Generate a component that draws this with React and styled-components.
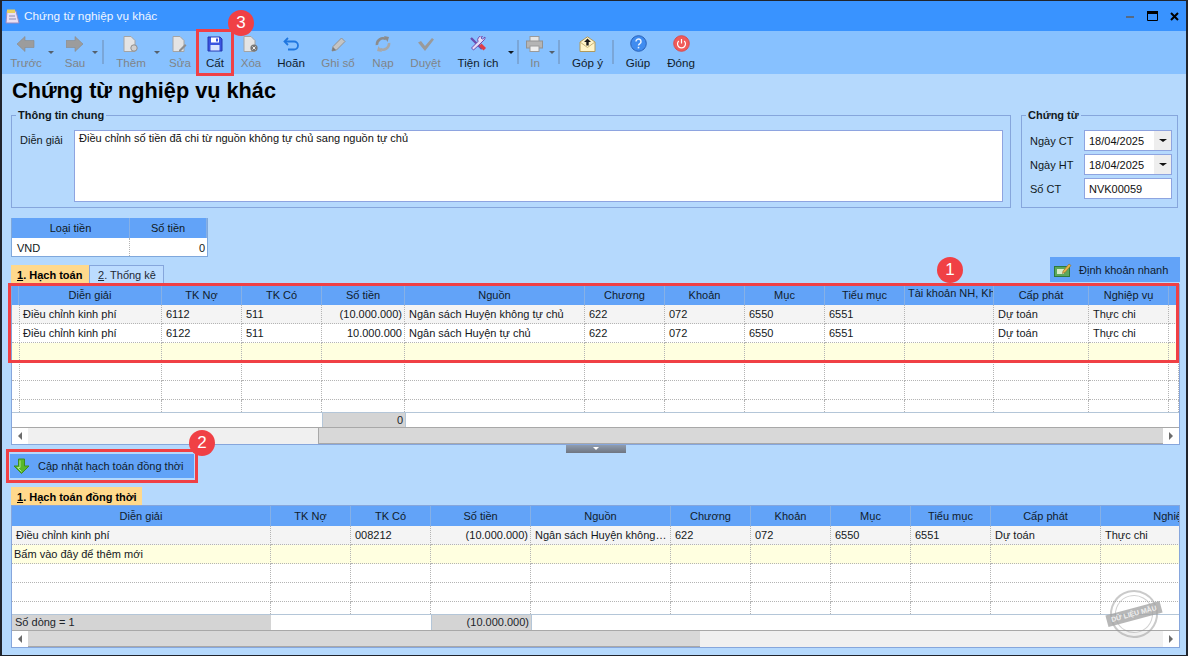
import React from 'react';
import styled, { createGlobalStyle } from 'styled-components';

const GlobalStyle = createGlobalStyle`
  html, body {
    margin: 0;
    padding: 0;
    background: #b5d9fd;
  }
  * {
    box-sizing: border-box;
  }
`;

const Window = styled.div`
  position: relative;
  width: 1188px;
  height: 656px;
  overflow: hidden;
  display: flex;
  flex-direction: column;
  background: #b5d9fd;
  border: solid #20242c;
  border-width: 1px 2px;
  font-family: "Liberation Sans", Arial, sans-serif;
  font-size: 11px;
  color: #101820;
`;

const TitleBar = styled.div`
  height: 30px;
  flex: none;
  display: flex;
  align-items: center;
  background: #3993ff;
  padding: 0 2px 0 2px;
  color: #eef5ff;
  font-size: 11.8px;
`;

const TitleText = styled.span`
  margin-left: 2px;
  flex: 1;
`;

const WinButton = styled.button`
  width: 20px;
  height: 16px;
  margin-left: ${(p) => p.$gap || 0}px;
  padding: 0;
  border: 0;
  background: none;
  display: flex;
  align-items: center;
  justify-content: center;
`;

const Toolbar = styled.div`
  height: 43px;
  flex: none;
  display: flex;
  background: #87c1ff;
  padding-left: 2px;
  font-size: 11.6px;
`;

const ToolButton = styled.div`
  width: ${(p) => p.$w}px;
  flex: none;
  display: flex;
  flex-direction: column;
  align-items: center;
  padding-top: 4px;
  color: ${(p) => (p.$disabled ? '#808488' : '#101c2c')};
  white-space: nowrap;
`;

const ToolIcon = styled.div`
  height: 17px;
  display: flex;
  align-items: center;
  justify-content: center;
`;

const ToolLabel = styled.span`
  margin-top: 4px;
  line-height: 14px;
`;

const DropBox = styled.div`
  width: ${(p) => p.$w}px;
  flex: none;
  padding-top: 20px;
`;

const Tri = styled.div`
  width: 0;
  height: 0;
  border-left: ${(p) => p.$size || 3}px solid transparent;
  border-right: ${(p) => p.$size || 3}px solid transparent;
  border-top: ${(p) => (p.$size ? p.$size - 0.5 : 3)}px solid ${(p) => p.$color || '#55606c'};
`;

const Sep = styled.div`
  width: 2px;
  height: 24px;
  flex: none;
  margin: 9px ${(p) => p.$right || 0}px 0 0;
  background: #7aa6d8;
`;

const Body = styled.div`
  flex: 1;
  display: flex;
  flex-direction: column;
  padding: 0 6px 0 9px;
`;

const PageTitle = styled.h1`
  margin: 4px 0 0 1px;
  font-size: 21.7px;
  line-height: 26px;
  font-weight: bold;
  color: #000;
`;

const TopRow = styled.div`
  display: flex;
  gap: 10px;
  margin: 4px 2px 0 0;
  height: 100px;
`;

const Group = styled.fieldset`
  margin: 0;
  padding: 8px 7px 0 8px;
  border: 1px solid #86a6dc;
  min-width: 0;
  flex: ${(p) => (p.$w ? `0 0 ${p.$w}px` : 1)};
  display: flex;
`;

const Legend = styled.legend`
  margin-left: -4px;
  padding: 0 2px;
  font-weight: bold;
  line-height: 14px;
`;

const MemoLabel = styled.label`
  width: 54px;
  flex: none;
  padding-top: 4px;
`;

const Memo = styled.textarea`
  flex: 1;
  height: 72px;
  resize: none;
  padding: 1px 4px;
  border: 1px solid #8ea4e0;
  border-radius: 0;
  background: #fff;
  font: inherit;
  color: #101010;
  outline: none;
`;

const FieldList = styled.div`
  display: flex;
  flex-direction: column;
  gap: 3px;
  width: 100%;
`;

const Field = styled.div`
  display: flex;
  align-items: center;
  height: 21px;
`;

const FieldLabel = styled.span`
  width: 54px;
  flex: none;
`;

const FieldBox = styled.div`
  width: 88px;
  height: 21px;
  flex: none;
  display: flex;
  align-items: center;
  justify-content: space-between;
  border: 1px solid #8ea4e0;
  background: #fff;
  padding-left: 4px;
  color: #101010;
`;

const FieldDrop = styled.div`
  width: 17px;
  height: 100%;
  display: flex;
  align-items: center;
  justify-content: center;
  background: #eeeeee;
`;

const MoneyTable = styled.div`
  width: 197px;
  margin-top: 10px;
  display: grid;
  grid-template-columns: 118px 77px;
  grid-template-rows: 20px 18px;
  border: solid #7fa8dc;
  border-width: 0 1px 1px;
`;

const MoneyHead = styled.div`
  display: flex;
  align-items: center;
  justify-content: center;
  background: #62a3f8;
  border-right: 1px solid #86b0e6;
`;

const MoneyCell = styled.div`
  display: flex;
  align-items: center;
  justify-content: ${(p) => (p.$right ? 'flex-end' : 'flex-start')};
  padding: 1px 2px 0 5px;
  background: #fff;
  border-right: ${(p) => (p.$right ? 'none' : '1px dotted #b4b4b4')};
`;

const TabRow = styled.div`
  height: 27px;
  display: flex;
  justify-content: space-between;
`;

const Tabs = styled.div`
  display: flex;
  align-self: flex-end;
`;

const Tab = styled.div`
  height: ${(p) => p.$h || 19}px;
  padding: 0 2px 0 ${(p) => (p.$active ? 5 : 8)}px;
  width: ${(p) => p.$w}px;
  display: flex;
  align-items: center;
  white-space: pre;
  font-weight: ${(p) => (p.$active ? 'bold' : 'normal')};
  background: ${(p) => (p.$active ? '#ffd98c' : '#bcdcff')};
  border: 1px solid ${(p) => (p.$active ? '#ffd98c' : '#86a6dc')};
  border-bottom: 0;
  color: ${(p) => (p.$active ? '#000' : '#1c2834')};

  u {
    text-decoration: underline;
  }
`;

const ActionButton = styled.button`
  width: ${(p) => p.$w}px;
  height: ${(p) => p.$h}px;
  flex: none;
  margin-left: ${(p) => p.$ml || 0}px;
  padding: 0 0 0 ${(p) => p.$pl}px;
  display: flex;
  align-items: center;
  gap: ${(p) => p.$gap}px;
  border: 0;
  background: #62a3f8;
  font: inherit;
  color: #101c2c;
  white-space: nowrap;
`;

const GridBox = styled.div`
  flex: none;
  border: 1px solid #86a6dc;
  background: #fff;
  overflow: hidden;
`;

const Row = styled.div`
  display: grid;
  grid-template-columns: ${(p) => p.$cols};
  height: ${(p) => p.$h}px;
  background: ${(p) => p.$bg || '#fff'};
`;

const HeadCell = styled.div`
  display: flex;
  align-items: ${(p) => (p.$top ? 'flex-start' : 'center')};
  justify-content: ${(p) => (p.$top ? 'flex-start' : 'center')};
  padding: ${(p) => (p.$top ? '2px 0 0 3px' : '0')};
  overflow: hidden;
  white-space: nowrap;
  background: #62a3f8;
  border-right: 1px solid #86b0e6;
  color: #101c2c;
`;

const Cell = styled.div`
  padding: 0 ${(p) => (p.$right ? 2 : 3)}px 0 ${(p) => p.$pl ?? 4}px;
  line-height: 18px;
  text-align: ${(p) => (p.$right ? 'right' : 'left')};
  overflow: hidden;
  white-space: nowrap;
  text-overflow: ellipsis;
  border-right: 1px dotted #b4b4b4;
  border-bottom: ${(p) => (p.$open ? 'none' : '1px dotted #b4b4b4')};
  color: #14181c;
`;

const SumRow = styled.div`
  display: flex;
  height: ${(p) => p.$h}px;
  border-top: 1px solid #b4c6d8;
  background: #fff;
`;

const SumCell = styled.div`
  width: ${(p) => (p.$w ? `${p.$w}px` : 'auto')};
  flex: ${(p) => (p.$w ? 'none' : 1)};
  padding: 0 2px 0 3px;
  line-height: 15px;
  text-align: ${(p) => (p.$right ? 'right' : 'left')};
  background: ${(p) => (p.$gray ? '#d4d4d4' : '#fff')};
  border-left: ${(p) => (p.$line ? '1px solid #b4c6d8' : 'none')};
  color: #20242a;
`;

const ScrollBar = styled.div`
  height: 17px;
  display: flex;
  background: #f0f0f0;
  border-top: 1px solid #a8a8a8;
`;

const ScrollBtn = styled.div`
  width: 16px;
  flex: none;
  display: flex;
  align-items: center;
  justify-content: center;
  background: #fff;
`;

const ScrollTrack = styled.div`
  flex: 1;
  padding-left: ${(p) => p.$left}px;
  display: flex;
`;

const Thumb = styled.div`
  width: ${(p) => p.$w}px;
  height: 100%;
  background: #d8d8d8;
  border: solid #a8a8a8;
  border-width: 0 0 1px ${(p) => (p.$flat ? 0 : 1)}px;
`;

const Arrow = styled.div`
  width: 0;
  height: 0;
  border-top: 4px solid transparent;
  border-bottom: 4px solid transparent;
  ${(p) => (p.$dir === 'left' ? 'border-right: 4px solid #6c6c6c;' : 'border-left: 4px solid #6c6c6c;')}
`;

const SplitRow = styled.div`
  height: 9px;
  flex: none;
  display: flex;
  justify-content: center;
  padding-left: 1px;
`;

const SplitHandle = styled.div`
  width: 60px;
  height: 8px;
  display: flex;
  justify-content: center;
  padding-top: 2px;
  background: linear-gradient(#8f9db0, #6f7580);
`;

const SubTabs = styled.div`
  display: flex;
  margin-top: 9px;
`;

const RedFrame = styled.div`
  position: absolute;
  left: ${(p) => p.$x}px;
  top: ${(p) => p.$y}px;
  width: ${(p) => p.$w}px;
  height: ${(p) => p.$h}px;
  border: 3px solid #f04045;
  pointer-events: none;
`;

const Badge = styled.div`
  position: absolute;
  left: ${(p) => p.$x - 13}px;
  top: ${(p) => p.$y - 13}px;
  width: 26px;
  height: 26px;
  border-radius: 50%;
  display: flex;
  align-items: center;
  justify-content: center;
  background: #f04045;
  color: #fff;
  font-size: 17px;
`;

const Stamp = styled.div`
  position: absolute;
  left: 1108px;
  top: 589px;
  width: 48px;
  height: 48px;
  border-radius: 50%;
  border: 2px solid rgba(150, 150, 150, 0.5);
  display: flex;
  align-items: center;
  justify-content: center;
  transform: rotate(-15deg);
  pointer-events: none;

  &::before {
    content: '';
    position: absolute;
    inset: 3px;
    border-radius: 50%;
    border: 1px solid rgba(150, 150, 150, 0.45);
  }
`;

const StampBand = styled.div`
  position: relative;
  flex: none;
  width: 56px;
  height: 12px;
  line-height: 12px;
  text-align: center;
  background: rgba(165, 165, 165, 0.8);
  color: #eee;
  font-size: 7px;
  font-weight: bold;
  white-space: nowrap;
`;

const Svg = ({ w = 18, h = 16, children }) => (
  <svg width={w} height={h} viewBox={`0 0 ${w} ${h}`} style={{ display: 'block' }}>
    {children}
  </svg>
);

const BackIcon = () => (
  <Svg>
    <path d="M0 8 8 .5v4h9v7H8v4z" fill="#9c9c9c" stroke="#8a8a8a" strokeWidth=".6" />
  </Svg>
);

const ForwardIcon = () => (
  <Svg>
    <path d="M17 8 9 .5v4H0v7h9v4z" fill="#9c9c9c" stroke="#8a8a8a" strokeWidth=".6" />
  </Svg>
);

const Page = () => <path d="M2 .5h7l4 4v11H2z" fill="#e4e4e4" stroke="#a4a4a4" />;

const NewIcon = () => (
  <Svg>
    <Page />
    <circle cx="12" cy="12" r="3.2" fill="#cfcfcf" stroke="#8e8e8e" />
  </Svg>
);

const EditIcon = () => (
  <Svg>
    <Page />
    <path d="M8 14 14 8l1.5 1.5-6 6H8z" fill="#8e8e8e" />
  </Svg>
);

const SaveIcon = () => (
  <Svg w={16}>
    <path d="M1 1h12l2 2v12H1z" fill="#3a55e0" stroke="#2438b0" />
    <rect x="4" y="1.5" width="8" height="5" fill="#fff" />
    <rect x="9" y="2.5" width="2" height="3" fill="#3a55e0" />
    <rect x="3.5" y="9" width="9" height="5.5" fill="#d8e4ff" />
  </Svg>
);

const DeleteIcon = () => (
  <Svg>
    <Page />
    <circle cx="12" cy="12" r="3.6" fill="#777" />
    <path d="m10.5 10.5 3 3m0-3-3 3" stroke="#eee" />
  </Svg>
);

const UndoIcon = () => (
  <Svg w={17}>
    <path d="M5 2 1.5 5.5 5 9" fill="none" stroke="#1f77e0" strokeWidth="1.8" />
    <path d="M2 5.5h9a3.8 3.8 0 0 1 0 8H5" fill="none" stroke="#1f77e0" strokeWidth="1.8" />
  </Svg>
);

const PencilIcon = () => (
  <Svg w={17}>
    <path d="M2 15 3 10.500 11.500 2 15 5.500 6.500 14z" fill="#c4c4c4" stroke="#929292" />
    <path d="M2 15 3 11l3 3z" fill="#7c7c7c" />
  </Svg>
);

const ReloadIcon = () => (
  <Svg>
    <path d="M3 9A6 6 0 0 1 12 3.200" fill="none" stroke="#8c8c8c" strokeWidth="2.600" />
    <path d="m10 0 5 1-1.500 5z" fill="#8c8c8c" />
    <path d="M15 7a6 6 0 0 1-9 5.800" fill="none" stroke="#a8a8a8" strokeWidth="2.600" />
    <path d="m8 16-5-1 1.500-5z" fill="#a8a8a8" />
  </Svg>
);

const CheckIcon = () => (
  <Svg>
    <path d="M1 6.500 4 5l4 5 7-8 2 1.500L8 15z" fill="#9a9a9a" />
  </Svg>
);

const ToolsIcon = () => (
  <Svg>
    <path d="M2 2 5 5M5 5l8 8" stroke="#6a4cb0" strokeWidth="2.400" fill="none" />
    <path d="M11 8 15 4a3.500 3.500 0 0 0 1-3l-2.500 2L12 2l1.500-2A4 4 0 0 0 9 5.500L2.500 12l2 2z" fill="#e6dcf6" stroke="#6a4cb0" />
    <path d="m10 10 2.500-2.500L17 12l-2.500 2.500z" fill="#e03c46" />
  </Svg>
);

const PrintIcon = () => (
  <Svg>
    <rect x="4" y=".5" width="9" height="5" fill="#e6e6e6" stroke="#9a9a9a" />
    <rect x=".5" y="5" width="16" height="7" fill="#b4b4b4" stroke="#929292" />
    <rect x="4" y="10" width="9" height="5.500" fill="#eee" stroke="#9a9a9a" />
  </Svg>
);

const MailIcon = () => (
  <Svg>
    <path d="M1 6 8.500 .8 16 6v9.500H1z" fill="#fff4c8" stroke="#b09a5c" />
    <path d="m1 6 7.500 5.500L16 6" fill="none" stroke="#c8b478" />
    <path d="M8.500 2.500 12 6H9.700v3.500H7.300V6H5z" fill="#1a1a1a" />
  </Svg>
);

const HelpIcon = () => (
  <svg width="17" height="17" viewBox="0 0 17 17" style={{ display: 'block' }}>
    <circle cx="8.500" cy="8.500" r="7.800" fill="#3f8cf0" stroke="#2a62b8" />
    <path d="M6 6.500a2.500 2.500 0 1 1 4 2c-1 .7-1.500 1-1.500 2" fill="none" stroke="#e8f2ff" strokeWidth="1.500" />
    <rect x="7.700" y="11.800" width="1.600" height="1.600" fill="#e8f2ff" />
  </svg>
);

const PowerIcon = () => (
  <svg width="17" height="17" viewBox="0 0 17 17" style={{ display: 'block' }}>
    <circle cx="8.500" cy="8.500" r="7.800" fill="#f05a5a" stroke="#d84c50" />
    <path d="M5.800 6a4 4 0 1 0 5.400 0" fill="none" stroke="#fff" strokeWidth="1.200" />
    <path d="M8.500 4v4.500" stroke="#fff" strokeWidth="1.200" />
  </svg>
);

const NoteIcon = () => (
  <Svg>
    <path d="M3 3h9l3 12H2z" fill="#eadff2" stroke="#9a8ac0" />
    <rect x="3" y="1.500" width="8" height="3.500" fill="#e8d060" />
    <path d="M5 8h6M5 11h7" stroke="#8a8ab0" />
  </Svg>
);

const GreenDownIcon = () => (
  <Svg>
    <path d="M5.500 1h6v7H16l-7.500 7.500L1 8h4.500z" fill="#58b82c" stroke="#3c8c1c" />
    <path d="M7 2.500v7H4.500l4 4" fill="none" stroke="#b4e68c" />
  </Svg>
);

const QuickIcon = () => (
  <Svg>
    <rect x=".5" y="4.500" width="15" height="10" fill="#5ca85c" stroke="#2e7a3c" />
    <rect x="3" y="7" width="7" height="5" fill="#d8ecc8" />
    <path d="m9 9 6-7 2 1.500-6 7-2.500 1z" fill="#e8b44c" stroke="#8a6a2c" strokeWidth=".6" />
  </Svg>
);

const tools = [
  { type: 'btn', w: 44, label: 'Trước', icon: <BackIcon />, disabled: true },
  { type: 'drop', w: 10 },
  { type: 'btn', w: 34, label: 'Sau', icon: <ForwardIcon />, disabled: true },
  { type: 'drop', w: 10 },
  { type: 'sep', right: 4 },
  { type: 'btn', w: 46, label: 'Thêm', icon: <NewIcon />, disabled: true },
  { type: 'drop', w: 9 },
  { type: 'btn', w: 34, label: 'Sửa', icon: <EditIcon />, disabled: true },
  { type: 'btn', w: 36, label: 'Cất', icon: <SaveIcon /> },
  { type: 'btn', w: 36, label: 'Xóa', icon: <DeleteIcon />, disabled: true },
  { type: 'btn', w: 44, label: 'Hoãn', icon: <UndoIcon /> },
  { type: 'btn', w: 50, label: 'Ghi sổ', icon: <PencilIcon />, disabled: true },
  { type: 'btn', w: 40, label: 'Nạp', icon: <ReloadIcon />, disabled: true },
  { type: 'btn', w: 45, label: 'Duyệt', icon: <CheckIcon />, disabled: true },
  { type: 'btn', w: 60, label: 'Tiện ích', icon: <ToolsIcon /> },
  { type: 'drop', w: 9, color: '#101820' },
  { type: 'sep', right: 2 },
  { type: 'btn', w: 28, label: 'In', icon: <PrintIcon />, disabled: true },
  { type: 'drop', w: 9 },
  { type: 'sep', right: 3 },
  { type: 'btn', w: 49, label: 'Góp ý', icon: <MailIcon /> },
  { type: 'sep' },
  { type: 'btn', w: 48, label: 'Giúp', icon: <HelpIcon /> },
  { type: 'btn', w: 38, label: 'Đóng', icon: <PowerIcon /> },
];

const topWidths = [7, 143, 80, 80, 83, 180, 80, 80, 80, 80, 89, 95, 80, 10];
const topHead = ['', 'Diễn giải', 'TK Nợ', 'TK Có', 'Số tiền', 'Nguồn', 'Chương', 'Khoản', 'Mục', 'Tiểu mục', 'Tài khoản NH, Kho bạc', 'Cấp phát', 'Nghiệp vụ', ''];
const topRows = [
  { bg: '#f4f4f4', cells: ['', 'Điều chỉnh kinh phí', '6112', '511', '(10.000.000)', 'Ngân sách Huyện không tự chủ', '622', '072', '6550', '6551', '', 'Dự toán', 'Thực chi', ''] },
  { bg: '#fff', cells: ['', 'Điều chỉnh kinh phí', '6122', '511', '10.000.000', 'Ngân sách Huyện tự chủ', '622', '072', '6550', '6551', '', 'Dự toán', 'Thực chi', ''] },
  { bg: '#ffffe0', cells: Array(14).fill('') },
  { bg: '#fff', cells: Array(14).fill('') },
  { bg: '#fff', cells: Array(14).fill('') },
];

const bottomWidths = [259, 80, 80, 100, 140, 80, 80, 80, 80, 110, 155];
const bottomHead = ['Diễn giải', 'TK Nợ', 'TK Có', 'Số tiền', 'Nguồn', 'Chương', 'Khoản', 'Mục', 'Tiểu mục', 'Cấp phát', 'Nghiệp vụ'];
const bottomRows = [
  { bg: '#f4f4f4', cells: ['Điều chỉnh kinh phí', '', '008212', '(10.000.000)', 'Ngân sách Huyện không tự chủ', '622', '072', '6550', '6551', 'Dự toán', 'Thực chi'] },
  { bg: '#ffffe0', hint: true, cells: ['Bấm vào đây để thêm mới', '', '', '', '', '', '', '', '', '', ''] },
  { bg: '#fff', cells: Array(11).fill('') },
  { bg: '#fff', cells: Array(11).fill('') },
];

const toCols = (widths) => widths.map((w) => `${w}px`).join(' ');

const DataGrid = ({ widths, head, rows, restHeight, moneyCol, children }) => {
  const cols = toCols(widths);
  return (
    <GridBox>
      <Row $cols={cols} $h={20}>
        {head.map((h, i) => (
          <HeadCell key={i} $top={h.startsWith('Tài khoản')}>{h}</HeadCell>
        ))}
      </Row>
      {rows.map((r, i) => (
        <Row key={i} $cols={cols} $h={19} $bg={r.bg}>
          {r.cells.map((c, j) => (
            <Cell key={j} $right={j === moneyCol} $pl={r.hint ? 2 : 4}>{c}</Cell>
          ))}
        </Row>
      ))}
      <Row $cols={cols} $h={restHeight}>
        {widths.map((_, j) => (
          <Cell key={j} $open />
        ))}
      </Row>
      {children}
    </GridBox>
  );
};

const App = () => (
  <>
    <GlobalStyle />
    <Window>
      <TitleBar>
        <NoteIcon />
        <TitleText>Chứng từ nghiệp vụ khác</TitleText>
        <WinButton>
          <svg width="8" height="3"><rect width="8" height="2" y="1" fill="#566a84" /></svg>
        </WinButton>
        <WinButton $gap={3}>
          <svg width="12" height="11"><path d="M.5 .5h10v9H.5z" fill="none" stroke="#000" /><rect width="11" height="3" fill="#000" /></svg>
        </WinButton>
        <WinButton $gap={1}>
          <svg width="9" height="9"><path d="m1 1 7 7m0-7-7 7" stroke="#000" strokeWidth="2" /></svg>
        </WinButton>
      </TitleBar>

      <Toolbar>
        {tools.map((t, i) => {
          if (t.type === 'sep') return <Sep key={i} $right={t.right} />;
          if (t.type === 'drop') return <DropBox key={i} $w={t.w}><Tri $color={t.color} /></DropBox>;
          return (
            <ToolButton key={i} $w={t.w} $disabled={t.disabled}>
              <ToolIcon>{t.icon}</ToolIcon>
              <ToolLabel>{t.label}</ToolLabel>
            </ToolButton>
          );
        })}
      </Toolbar>

      <Body>
        <PageTitle>Chứng từ nghiệp vụ khác</PageTitle>

        <TopRow>
          <Group>
            <Legend>Thông tin chung</Legend>
            <MemoLabel>Diễn giải</MemoLabel>
            <Memo readOnly defaultValue="Điều chỉnh số tiền đã chi từ nguồn không tự chủ sang nguồn tự chủ" />
          </Group>
          <Group $w={157}>
            <Legend>Chứng từ</Legend>
            <FieldList>
              <Field>
                <FieldLabel>Ngày CT</FieldLabel>
                <FieldBox>18/04/2025<FieldDrop><Tri $size={4} $color="#111" /></FieldDrop></FieldBox>
              </Field>
              <Field>
                <FieldLabel>Ngày HT</FieldLabel>
                <FieldBox>18/04/2025<FieldDrop><Tri $size={4} $color="#111" /></FieldDrop></FieldBox>
              </Field>
              <Field>
                <FieldLabel>Số CT</FieldLabel>
                <FieldBox>NVK00059</FieldBox>
              </Field>
            </FieldList>
          </Group>
        </TopRow>

        <MoneyTable>
          <MoneyHead>Loại tiền</MoneyHead>
          <MoneyHead>Số tiền</MoneyHead>
          <MoneyCell>VND</MoneyCell>
          <MoneyCell $right>0</MoneyCell>
        </MoneyTable>

        <TabRow>
          <Tabs>
            <Tab $active $w={78}><u>1</u>. Hạch toán</Tab>
            <Tab $w={75}><u>2</u>. Thống kê</Tab>
          </Tabs>
          <ActionButton $w={130} $h={25} $pl={4} $gap={7}>
            <QuickIcon />
            Định khoản nhanh
          </ActionButton>
        </TabRow>

        <DataGrid widths={topWidths} head={topHead} rows={topRows} restHeight={12} moneyCol={4}>
          <SumRow $h={15}>
            <SumCell $w={310} />
            <SumCell $w={83} $gray $right $line>0</SumCell>
            <SumCell $line />
          </SumRow>
          <ScrollBar>
            <ScrollBtn><Arrow $dir="left" /></ScrollBtn>
            <ScrollTrack $left={290}><Thumb $w={845} /></ScrollTrack>
            <ScrollBtn><Arrow $dir="right" /></ScrollBtn>
          </ScrollBar>
        </DataGrid>

        <SplitRow>
          <SplitHandle><Tri $color="#fff" /></SplitHandle>
        </SplitRow>

        <ActionButton $w={184} $h={24} $ml={-1} $pl={3} $gap={7}>
          <GreenDownIcon />
          Cập nhật hạch toán đồng thời
        </ActionButton>

        <SubTabs>
          <Tab $active $w={131} $h={18}><u>1</u>. Hạch toán đồng thời</Tab>
        </SubTabs>

        <DataGrid widths={bottomWidths} head={bottomHead} rows={bottomRows} restHeight={12} moneyCol={3}>
          <SumRow $h={16}>
            <SumCell $w={259} $gray>Số dòng = 1</SumCell>
            <SumCell $w={160} />
            <SumCell $w={100} $gray $right $line>(10.000.000)</SumCell>
            <SumCell $line />
          </SumRow>
          <ScrollBar>
            <ScrollBtn><Arrow $dir="left" /></ScrollBtn>
            <ScrollTrack $left={0}><Thumb $w={672} $flat /></ScrollTrack>
            <ScrollBtn><Arrow $dir="right" /></ScrollBtn>
          </ScrollBar>
        </DataGrid>
      </Body>

      <Stamp>
        <StampBand>DỮ LIỆU MẪU</StampBand>
      </Stamp>

      <RedFrame $x={6} $y={282} $w={1171} $h={80} />
      <RedFrame $x={4} $y={448} $w={192} $h={34} />
      <RedFrame $x={194} $y={28} $w={38} $h={47} />
      <Badge $x={948} $y={269}>1</Badge>
      <Badge $x={200} $y={442}>2</Badge>
      <Badge $x={239} $y={22}>3</Badge>
    </Window>
  </>
);

export default App;
